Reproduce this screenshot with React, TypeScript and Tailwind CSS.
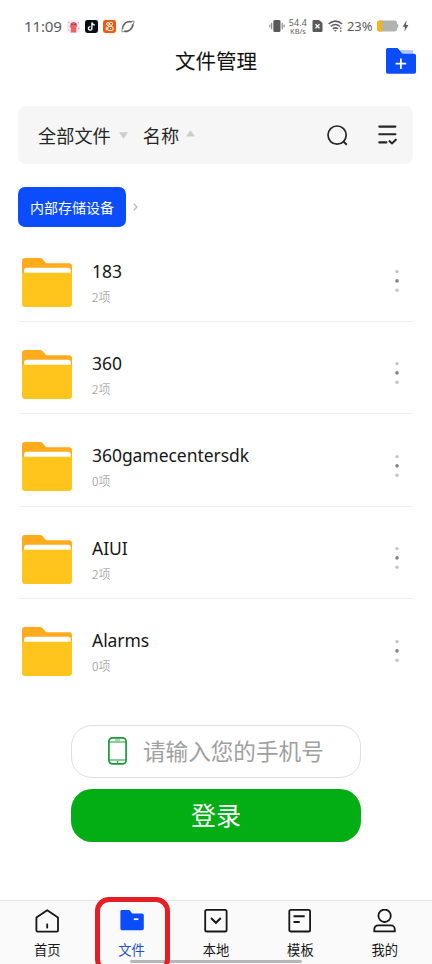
import React from 'react';

interface Folder {
  name: string;
  count: number;
}

interface Tab {
  label: string;
  icon: React.ReactNode;
  active?: boolean;
}

const folders: Folder[] = [
  { name: '183', count: 2 },
  { name: '360', count: 2 },
  { name: '360gamecentersdk', count: 0 },
  { name: 'AIUI', count: 2 },
  { name: 'Alarms', count: 0 },
];

const tabs: Tab[] = [
  {
    label: '首页',
    icon: (
      <svg width="24" height="24" viewBox="0 0 24 24" fill="none" stroke="#171717" strokeWidth="1.8">
        <path d="M1.4 8.6 12.2 1.2 23 8.6V21.4a1.2 1.2 0 0 1-1.2 1.2H2.6a1.2 1.2 0 0 1-1.2-1.2Z" strokeLinejoin="round" />
        <path d="M12.2 14.6V19.4" />
      </svg>
    ),
  },
  {
    label: '文件',
    active: true,
    icon: (
      <svg width="24" height="24" viewBox="0 0 24 24">
        <path d="M1.8 1H9.4L12.2 4.6H22.2A1.6 1.6 0 0 1 23.8 6.2V19.6A1.6 1.6 0 0 1 22.2 21.2H2A1.6 1.6 0 0 1 .4 19.6V2.4A1.4 1.4 0 0 1 1.8 1Z" fill="#0b4dfb" />
        <path d="M13.8 10.2H18.4" stroke="#fff" strokeWidth="1.7" />
      </svg>
    ),
  },
  {
    label: '本地',
    icon: (
      <svg width="24" height="24" viewBox="0 0 24 24" fill="none" stroke="#171717" strokeWidth="1.8">
        <rect x="1.2" y=".9" width="21.4" height="21.6" rx="1.6" />
        <path d="M7 9 11.9 13.8 16.8 9" strokeWidth="2" />
      </svg>
    ),
  },
  {
    label: '模板',
    icon: (
      <svg width="24" height="24" viewBox="0 0 24 24" fill="none" stroke="#171717" strokeWidth="1.8">
        <rect x="1.3" y=".9" width="20.8" height="21.6" rx="1.6" />
        <path d="M5.5 7.3H16.7M5.5 13.1H11.7" strokeWidth="2" />
      </svg>
    ),
  },
  {
    label: '我的',
    icon: (
      <svg width="24" height="24" viewBox="0 0 24 24" fill="none" stroke="#171717" strokeWidth="1.8">
        <circle cx="11.6" cy="6.8" r="6.2" />
        <path d="M1.3 22.4V20A4 4 0 0 1 5.3 16.3H17.7A4 4 0 0 1 21.8 20V22.4Z" strokeLinejoin="round" />
      </svg>
    ),
  },
];

const StatusBar = () => (
  <div className="flex h-[52px] items-center justify-between pl-6 pr-[23px] text-[#5c5c5c]">
    <div className="flex items-center gap-[5px] pt-px">
      <span className="mr-px w-[37px] whitespace-nowrap text-[15.2px] leading-none tracking-[-0.2px]">11:09</span>
      <svg width="13" height="13" viewBox="0 0 13 13">
        <rect width="13" height="13" rx="2.5" fill="#f4ecf6" />
        <path d="M3.6 3.2Q6.5.6 9.6 3.2L10.2 6.4H9.3V12.4H3.8V7.2H3Z" fill="#ef6262" />
        <path d="M4.1 4.2H5.8M7.3 4.2H9" stroke="#5d3550" strokeWidth="1.1" />
        <path d="M1.2 2.4h1M1.6 6h.8M11 2.8h1M11.2 8.6h1M1.2 10.2h1" stroke="#9a8fe0" />
      </svg>
      <svg width="13" height="13" viewBox="0 0 13 13" fill="none">
        <rect width="13" height="13" rx="2.4" fill="#0d0d16" />
        <path d="M6.9 2.4V8.4A1.75 1.75 0 1 1 5.4 6.6M7 2.6Q7.5 4.8 9.8 5" stroke="#f2f7fb" strokeWidth="1.4" />
      </svg>
      <svg width="13" height="13" viewBox="0 0 13 13" fill="none" stroke="#fff">
        <rect width="13" height="13" rx="2.4" fill="#f2590d" stroke="none" />
        <circle cx="5" cy="4" r="1.4" />
        <circle cx="8" cy="3.8" r="1.6" />
        <rect x="4.9" y="6.5" width="5" height="4" rx="1" />
        <path d="m4.8 7.8-1.5-.8v3l1.5-.8M7 8.5h1" />
      </svg>
      <svg width="14" height="13" viewBox="0 0 14 13" fill="none" stroke="#666">
        <path d="M1.6 8.8C1.2 5.8 4 2.6 7 1.8 8.6 1.4 9.8 1.5 10.6 2" strokeWidth="1.7" />
        <path d="M3 11.2C6 12 9.4 10.2 11 7.4 11.8 6 11.9 5 11.8 4.2" strokeWidth="1.9" />
        <path d="M2.6 11.6C.2 12.2.4 10.6 1.8 8.8M10.2 1.8C12 .9 13.2.9 13.2 1.7 13.2 2.6 12.4 3.6 11.8 4.3" strokeWidth=".9" />
      </svg>
    </div>
    <div className="flex items-center">
      <svg width="16" height="14" viewBox="0 0 16 14" className="mr-[3px]">
        <rect x="4.3" y="1" width="7.2" height="12" rx="1.5" fill="#5a5a5a" />
        <path d="M2.7 3.8V10.2M13.2 3.8V10.2M.8 5.6V8.4M15.1 5.6V8.4" stroke="#777" />
      </svg>
      <div className="mr-1 flex w-5 flex-col items-center whitespace-nowrap">
        <span className="text-[9px] leading-[9px] tracking-[0.1px]">54.4</span>
        <span className="text-[7.5px] leading-[8px]">KB/s</span>
      </div>
      <svg width="11" height="14" viewBox="0 0 11 14" className="mr-[5px]">
        <path d="M1.5 1H7L10.5 4V11.8A1.2 1.2 0 0 1 9.3 13H1.7A1.2 1.2 0 0 1 .5 11.8V2A1 1 0 0 1 1.5 1Z" fill="#5a5a5a" />
        <path d="m3.5 5.3 4 4M7.5 5.3l-4 4" stroke="#fff" strokeWidth="1.3" />
      </svg>
      <svg width="15" height="14" viewBox="0 0 15 14" fill="none" stroke="#606060" strokeWidth="1.5" className="mr-1">
        <path d="M.6 5Q7.4-.8 14.2 5M2.8 7.5Q7.4 3.4 12 7.5M5 9.9Q7.4 7.8 9.8 9.9" />
        <path d="m7.4 12.8-1.5-1.7h3Z" fill="#606060" stroke="none" />
        <path d="M12.8 8.2V10M12.8 11.2V13" strokeWidth="1.2" />
      </svg>
      <span className="mr-1 mt-px w-[26px] whitespace-nowrap text-[13px] leading-none tracking-[-0.1px]">23%</span>
      <svg width="22" height="12" viewBox="0 0 22 12" className="mr-[3px]">
        <rect x="0" y=".5" width="20" height="11" rx="2.5" fill="#b2b2b2" />
        <path d="M2.5.5H5.2V11.5H2.5A2.5 2.5 0 0 1 0 9V3A2.5 2.5 0 0 1 2.5.5Z" fill="#f4b51c" />
        <path d="M20.7 4.2V7.8" stroke="#b2b2b2" strokeWidth="1.3" />
      </svg>
      <svg width="7" height="12" viewBox="0 0 7 12">
        <path d="M4.5.6.7 6.7H3L2.5 11.4 6.4 5.1H4Z" fill="#5a5a5a" />
      </svg>
    </div>
  </div>
);

const Header = () => (
  <div className="grid h-[54px] grid-cols-[1fr_auto_1fr] items-start">
    <h1 className="col-start-2 mt-[-5px] whitespace-nowrap text-[20.5px] font-normal leading-7 text-[#111]">文件管理</h1>
    <svg width="30" height="26" viewBox="0 0 30 26" className="mr-4 mt-[-4px] justify-self-end">
      <rect x="12" y="2" width="15.2" height="9" rx="1" fill="#b6c8fb" />
      <path d="M1.8 0H11.6L16.4 5.7H28.2A1.8 1.8 0 0 1 30 7.5V24A1.8 1.8 0 0 1 28.2 25.8H1.8A1.8 1.8 0 0 1 0 24V1.8A1.8 1.8 0 0 1 1.8 0Z" fill="#0b4dfb" />
      <path d="M9.6 15.7H20.2M14.9 10.4V21" stroke="#fff" strokeWidth="1.8" />
    </svg>
  </div>
);

const Toolbar = () => (
  <div className="ml-[18px] mr-[19px] flex h-[58px] items-center rounded-lg bg-[#f6f6f6] pl-5 pr-4 text-[#262626]">
    <span className="mt-[2px] text-[18.2px] leading-6">全部文件</span>
    <svg width="9" height="7" viewBox="0 0 9 7" className="ml-2">
      <path d="M0 .3H9L4.5 6.8Z" fill="#ccc" />
    </svg>
    <span className="ml-[15px] mt-[2px] text-[18.2px] leading-6">名称</span>
    <svg width="9" height="7" viewBox="0 0 9 7" className="ml-[7px] mt-[-3px]">
      <path d="M0 6.6H9L4.5.2Z" fill="#ccc" />
    </svg>
    <svg width="21" height="21" viewBox="0 0 21 21" fill="none" stroke="#262626" strokeWidth="1.7" className="ml-auto">
      <circle cx="10.1" cy="10.1" r="9.1" />
      <path d="m16.2 16.3 3.6 3.5" strokeWidth="1.9" />
    </svg>
    <svg width="19" height="20" viewBox="0 0 19 20" fill="none" stroke="#262626" strokeWidth="2.1" strokeLinecap="round" className="ml-[30px]">
      <path d="M1.3 1.6H17.4M1.3 9.3H17.4M1.3 17.4H8.4M11.6 16.2 14 18.4 17.8 14.7" />
    </svg>
  </div>
);

const FolderRow = ({ name, count }: Folder) => (
  <div className="ml-[19px] mr-[19px] flex h-[92.4px] border-b border-[#eeeeee] pl-[3px] last:border-transparent">
    <svg width="50" height="49" viewBox="0 0 50 49" className="mt-[28px] shrink-0">
      <path d="M3 0H18.2C20 0 20.5 1 21.4 2.1L23.3 4.2C24 5 24.6 5.2 25.6 5.2H47A3 3 0 0 1 50 8.2V25H0V3A3 3 0 0 1 3 0Z" fill="#ffab1c" />
      <path d="M5 9.7H46A2.8 2.8 0 0 1 48.8 12.5V20H2V12.7A3 3 0 0 1 5 9.7Z" fill="#fff" />
      <path d="M0 14.8H50V46A3 3 0 0 1 47 49H3A3 3 0 0 1 0 46Z" fill="#ffc51c" />
    </svg>
    <div className="ml-5 mt-[29px] flex flex-col">
      <span className="text-[17.5px] leading-6 tracking-[-0.05px] text-[#171717]">{name}</span>
      <span className="mt-[6px] font-['Noto_Sans_CJK_SC',sans-serif] text-[12px] font-light leading-4 text-[#888]">{count}项</span>
    </div>
    <svg width="4" height="24" viewBox="0 0 4 24" className="ml-auto mr-[14px] mt-[39.5px]">
      <circle cx="2" cy="2.6" r="1.7" fill="#c3c3c3" />
      <circle cx="2" cy="11.9" r="1.8" fill="#858585" />
      <circle cx="2" cy="21.2" r="1.7" fill="#c3c3c3" />
    </svg>
  </div>
);

const LoginForm = () => (
  <div className="mx-[71px] mt-[33.5px] flex flex-col gap-[11px]">
    <div className="flex h-[53px] items-center rounded-[21px] border border-[#dfdfdf] bg-white pl-9">
      <svg width="19" height="28" viewBox="0 0 19 28" fill="none" stroke="#189b35">
        <rect x=".9" y=".9" width="17.2" height="26" rx="3.6" strokeWidth="1.7" />
        <path d="M1.2 5H17.8M1.2 23H17.8" strokeWidth="1" />
        <path d="M7 3H12" strokeWidth=".8" />
        <circle cx="9.5" cy="24.9" r=".9" fill="#189b35" stroke="none" />
      </svg>
      <span className="ml-4 mt-[2px] whitespace-nowrap text-[22.6px] leading-8 text-[#a0a0a0]">请输入您的手机号</span>
    </div>
    <button className="h-[53px] rounded-[21px] bg-[#02ae14] text-[25px] leading-8 text-white">登录</button>
  </div>
);

const TabBar = () => (
  <nav className="relative mt-auto h-16 border-t border-[#e3e3e3] bg-[#fafafa] px-[5px]">
    <div className="grid grid-cols-5">
      {tabs.map((tab) => (
        <div key={tab.label} className="flex flex-col items-center pt-[8px]">
          {tab.icon}
          <span className={`mt-[7px] text-[13.3px] leading-5 ${tab.active ? 'text-[#1b50c8]' : 'text-[#171717]'}`}>
            {tab.label}
          </span>
        </div>
      ))}
    </div>
    <div className="absolute left-[130px] top-[59px] h-[3px] w-[172px] rounded-full bg-[#b7b7b9]" />
    <div className="absolute left-[95px] top-[-4px] h-[76px] w-[75px] rounded-[14px] border-[5px] border-[#e71d25]" />
  </nav>
);

const App = () => {
  return (
    <div className="flex h-[964px] w-[432px] flex-col overflow-hidden bg-white font-['Noto_Sans','Noto_Sans_CJK_SC',sans-serif]">
      <StatusBar />
      <Header />
      <Toolbar />
      <div className="ml-[18px] mt-[23px] flex h-10 items-center">
        <span className="flex h-10 w-[108px] items-center justify-center rounded-[7px] bg-[#0b4dfb] pt-px text-[14px] leading-5 text-white">
          内部存储设备
        </span>
        <svg width="5" height="8" viewBox="0 0 5 8" fill="none" stroke="#b8b8b8" strokeWidth="1.4" className="ml-[7px]">
          <path d="M.8.6 3.8 4 .8 7.4" />
        </svg>
      </div>
      <div className="mt-[2.5px] flex flex-col">
        {folders.map((folder) => (
          <FolderRow key={folder.name} name={folder.name} count={folder.count} />
        ))}
      </div>
      <LoginForm />
      <TabBar />
    </div>
  );
};

export default App;
